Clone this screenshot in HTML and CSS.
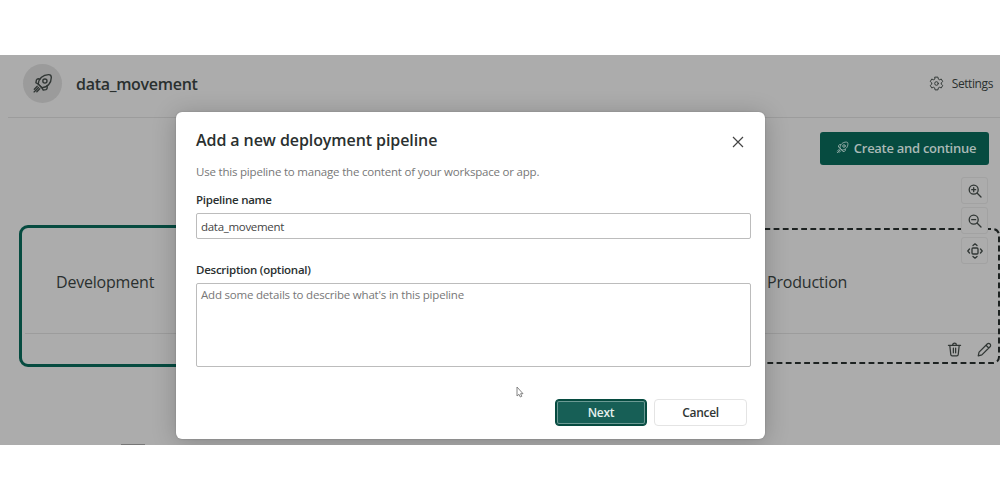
FILE: index.html
```html
<!DOCTYPE html>
<html lang="en">
<head>
  <meta charset="UTF-8">
  <title>Deployment pipelines</title>
  <link rel="stylesheet" href="styles.css">
</head>
<body>

  <svg class="sprite" width="0" height="0">
    <symbol id="rocket" viewBox="0 0 20 20">
      <path d="M6 10.600C6.300 5 10.500 1.700 15.800 1.600q2.600 0 2.600 2.600C18.300 9.500 15 13.700 9.400 14Z" />
      <circle cx="12.300" cy="7.700" r="2" />
      <path d="M7.400 5.800 6 5.500Q4.800 5.500 4.200 6.700L3.700 9.300 6 10.600 9.400 14 10.700 16.300 13.300 15.800Q14.500 15.200 14.500 14L14.200 12.600" />
      <path d="M5 12.600 2.200 15.400M7.400 15 4.600 17.800M6.200 13.800 2 18" />
    </symbol>
  </svg>

  <div class="app">
    <header class="header">
      <div class="avatar"><svg class="icon"><use href="#rocket" /></svg></div>
      <h1>data_movement</h1>
      <div class="settings">
        <svg class="icon" viewBox="0 0 20 20">
          <path d="M8.100 1.500h3.800l.6 2.700 1.300.8 2.600-.9 1.900 3.300-2 1.800v1.600l2 1.800-1.900 3.300-2.600-.9-1.300.8-.6 2.700H8.100l-.6-2.700-1.300-.8-2.600.9-1.900-3.300 2-1.800V9.200l-2-1.800 1.900-3.300 2.600.9 1.300-.8Z" />
          <circle cx="10" cy="10" r="2.400" />
        </svg>
        <span>Settings</span>
      </div>
    </header>

    <div class="toolbar">
      <button class="create"><svg class="icon"><use href="#rocket" /></svg><span>Create and continue</span></button>
    </div>

    <div class="stages">
      <section class="stage dev">
        <h2>Development</h2>
        <div class="stage-footer"></div>
      </section>
      <section class="stage prod">
        <svg class="outline"><rect x="-20" y="1" width="259" height="134" rx="6" /></svg>
        <h2>Production</h2>
        <div class="stage-footer">
          <svg class="icon" viewBox="0 0 16 16">
            <path d="M1.500 3.500h13M6 3.300a2 2 0 0 1 4 0M3 3.700l1 9.500c.1.900.7 1.500 1.500 1.500h5c.8 0 1.400-.6 1.500-1.500l1-9.500M6.800 6.500v5M9.200 6.500v5" />
          </svg>
          <svg class="icon" viewBox="0 0 16 16">
            <path d="M1.300 14.700 2.200 10.800 10.900 2.100a2.050 2.050 0 0 1 3 3L5.200 13.800ZM9.600 3.500l2.900 2.900" />
          </svg>
        </div>
      </section>
    </div>

    <div class="zoom">
      <button><svg class="icon" viewBox="0 0 14 14"><circle cx="5.700" cy="5.700" r="4.500" /><path d="M9 9l4 4M3.700 5.700h4M5.700 3.700v4" /></svg></button>
      <button><svg class="icon" viewBox="0 0 14 14"><circle cx="5.700" cy="5.700" r="4.500" /><path d="M9 9l4 4M3.700 5.700h4" /></svg></button>
      <button><svg class="icon fit" viewBox="0 0 16 16"><rect x="5" y="5" width="6" height="6" rx="1" /><path d="M6 2.500 8 .8l2 1.700M6 13.500l2 1.700 2-1.700M2.500 6 .8 8l1.700 2M13.500 6l1.700 2-1.700 2" /></svg></button>
    </div>
    <div class="taskbar"></div>
  </div>

  <div class="modal">
    <div class="modal-head">
      <h3>Add a new deployment pipeline</h3>
      <svg class="close" viewBox="0 0 12 12"><path d="M1 1l10 10M11 1 1 11" /></svg>
    </div>
    <p class="hint">Use this pipeline to manage the content of your workspace or app.</p>
    <label for="name">Pipeline name</label>
    <input id="name" type="text" value="data_movement">
    <label for="desc">Description (optional)</label>
    <textarea id="desc" placeholder="Add some details to describe what's in this pipeline"></textarea>
    <div class="actions">
      <button class="next">Next</button>
      <button class="cancel">Cancel</button>
    </div>
  </div>

  <svg class="cursor" viewBox="0 0 8 12"><path d="M1 1v9l2-1.700 1.300 2.700 1.500-.7-1.200-2.600H7Z" /></svg>

</body>
</html>
```
FILE: styles.css
```css
* {
  box-sizing: border-box;
}

body {
  margin: 0;
  padding-top: 55px;
  height: 500px;
  overflow: hidden;
  background: #fff;
  color: #2a302f;
  font-family: "Open Sans", "Noto Sans", sans-serif;
}

h1, h2, h3, p {
  margin: 0;
}

button, input, textarea {
  font-family: inherit;
}

.sprite {
  position: absolute;
}

.icon {
  fill: none;
  stroke: #303634;
  stroke-width: 1.3;
  stroke-linecap: round;
  stroke-linejoin: round;
  flex: none;
}

/* page behind the dialog */
.app {
  position: relative;
  height: 390px;
  overflow: hidden;
  background: #acacac;
}

.header {
  display: flex;
  align-items: center;
  height: 63px;
  margin-left: 8px;
  padding: 0 7px 5px 15px;
  border-bottom: 1px solid #9c9c9c;
}

.avatar {
  display: flex;
  align-items: center;
  justify-content: center;
  width: 39px;
  height: 39px;
  border-radius: 50%;
  background: #9b9b9b;
}

.avatar .icon {
  width: 21px;
  height: 21px;
}

h1 {
  margin-left: 14px;
  font-size: 16px;
  font-weight: 600;
  letter-spacing: -0.3px;
}

.settings {
  display: flex;
  align-items: center;
  gap: 8px;
  margin-left: auto;
  font-size: 12px;
  letter-spacing: -0.4px;
}

.settings .icon {
  width: 15px;
  height: 15px;
}

.toolbar {
  display: flex;
  justify-content: flex-end;
  padding: 14px 11px 0 0;
}

.create {
  display: flex;
  align-items: center;
  justify-content: center;
  gap: 5px;
  width: 169px;
  height: 33px;
  padding: 0 0 2px 3px;
  border: none;
  border-radius: 3px;
  background: #064b40;
  color: #aab9b6;
  font-size: 13px;
  font-weight: 600;
  letter-spacing: -0.28px;
}

.create .icon {
  width: 13px;
  height: 13px;
  stroke: #9fb3af;
}

.stages {
  display: flex;
  justify-content: space-between;
  padding: 60px 0 0 19px;
}

.stage {
  display: flex;
  flex-direction: column;
}

h2 {
  font-size: 16px;
  font-weight: 400;
  letter-spacing: -0.2px;
}

.dev {
  width: 240px;
  height: 142px;
  padding: 43px 3px 0;
  border: 3px solid #064b40;
  border-radius: 9px;
}

.dev h2 {
  padding-left: 31px;
}

.stage-footer {
  display: flex;
  align-items: center;
  justify-content: flex-end;
  gap: 15px;
  height: 31px;
  margin-top: 40px;
  border-top: 1px solid #9c9c9c;
}

.prod {
  position: relative;
  width: 240px;
  height: 138px;
  margin-top: 3px;
  padding-top: 43px;
}

.prod h2 {
  padding-left: 7px;
}

.prod .stage-footer {
  padding-right: 8px;
}

.stage-footer .icon {
  width: 15px;
  height: 15px;
}

.outline {
  position: absolute;
  top: 0;
  left: 0;
  width: 240px;
  height: 138px;
  fill: none;
  stroke: #1d2221;
  stroke-width: 2;
  stroke-dasharray: 5.8 3.4;
}

.zoom {
  position: absolute;
  top: 122px;
  right: 12px;
  display: flex;
  flex-direction: column;
  gap: 3px;
}

.zoom button {
  display: flex;
  align-items: center;
  justify-content: center;
  width: 27px;
  height: 27px;
  padding: 0;
  border: 1px solid #a2a2a2;
  border-radius: 3px;
  background: #acacac;
}

.zoom .icon {
  width: 14px;
  height: 14px;
}

.zoom .fit {
  width: 16px;
  height: 16px;
}

.taskbar {
  position: absolute;
  bottom: 0;
  left: 121px;
  width: 24px;
  height: 1px;
  background: #777;
}

/* dialog */
.modal {
  position: absolute;
  top: 112px;
  left: 176px;
  display: flex;
  flex-direction: column;
  width: 589px;
  height: 327px;
  padding: 17px 15px 0 20px;
  border-radius: 6px;
  background: #fff;
  box-shadow: 0 3px 24px rgba(0, 0, 0, 0.22), 0 0 2px rgba(0, 0, 0, 0.2);
  clip-path: inset(-57px -60px -6px -60px);
}

.modal-head {
  display: flex;
  align-items: center;
  justify-content: space-between;
  height: 22px;
  padding-right: 6px;
}

h3 {
  font-size: 16px;
  font-weight: 600;
  letter-spacing: -0.08px;
}

.close {
  width: 12px;
  height: 12px;
  margin-top: 4px;
  stroke: #444;
  stroke-width: 1.2;
}

.hint {
  margin-top: 12px;
  color: #777;
  font-size: 11.5px;
  line-height: 18px;
  letter-spacing: -0.2px;
}

label {
  margin-top: 11px;
  font-size: 11.5px;
  font-weight: 600;
  line-height: 16px;
  letter-spacing: -0.25px;
}

input, textarea {
  width: 555px;
  padding: 0 4px;
  border: 1px solid #bcbcbc;
  border-radius: 2px;
  outline: none;
  background: #fff;
  color: #444;
  font-size: 11.5px;
  letter-spacing: -0.2px;
}

input {
  height: 26px;
  margin: 5px 0 12px;
  letter-spacing: -0.3px;
}

textarea {
  height: 84px;
  margin-top: 5px;
  padding-top: 3px;
  resize: none;
  line-height: 16px;
}

textarea::placeholder {
  color: #777;
}

.actions {
  display: flex;
  justify-content: flex-end;
  gap: 7px;
  margin-top: 32px;
  padding-right: 3px;
}

.actions button {
  width: 93px;
  height: 27px;
  padding: 0;
  border-radius: 4px;
  font-size: 12px;
  font-weight: 600;
  letter-spacing: -0.3px;
}

.actions .next {
  width: 92px;
  border: 1px solid #064b40;
  background: #175f56;
  box-shadow: inset 0 0 0 1px #064b40, inset 0 0 0 2px #6c9a94;
  color: #e4efed;
}

.cancel {
  border: 1px solid #e4e4e4;
  background: #fff;
  color: #303634;
}

.cursor {
  position: absolute;
  top: 386px;
  left: 516px;
  width: 8px;
  height: 12px;
  fill: #fff;
  stroke: #777;
  stroke-width: 0.9;
}
```
